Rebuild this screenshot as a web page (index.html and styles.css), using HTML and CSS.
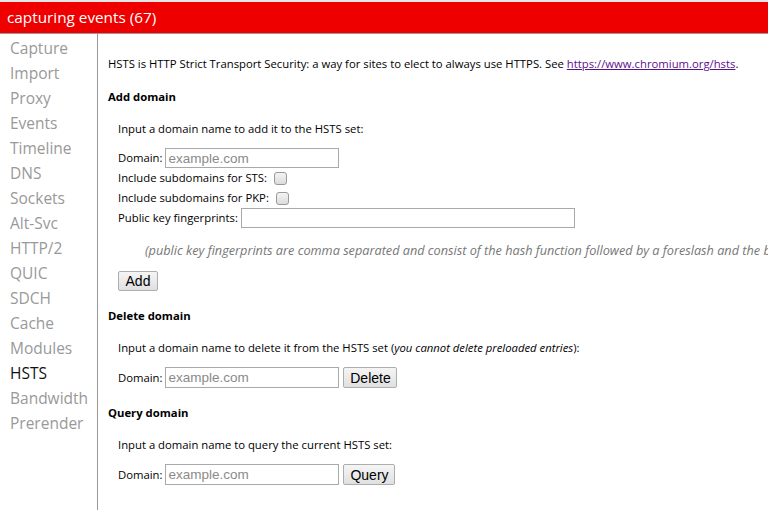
FILE: index.html
```html
<!DOCTYPE html>
<html>
<head>
<meta charset="utf-8">
<link rel="stylesheet" href="styles.css">
</head>
<body>
<div class="status-bar">capturing events (67)</div>
<div class="main">
  <nav class="tabs">
    <div class="tab">Capture</div>
    <div class="tab">Import</div>
    <div class="tab">Proxy</div>
    <div class="tab">Events</div>
    <div class="tab">Timeline</div>
    <div class="tab">DNS</div>
    <div class="tab">Sockets</div>
    <div class="tab">Alt-Svc</div>
    <div class="tab">HTTP/2</div>
    <div class="tab">QUIC</div>
    <div class="tab">SDCH</div>
    <div class="tab">Cache</div>
    <div class="tab">Modules</div>
    <div class="tab selected">HSTS</div>
    <div class="tab">Bandwidth</div>
    <div class="tab">Prerender</div>
  </nav>
  <div class="content">
    <p class="intro">HSTS is HTTP Strict Transport Security: a way for sites to elect to always use HTTPS. See <a href="#">https://www.chromium.org/hsts</a>.</p>

    <h4 class="heading h-add">Add domain</h4>
    <p class="desc">Input a domain name to add it to the HSTS set:</p>
    <div class="form">
      <div class="row"><span>Domain:</span><input class="domain" type="text" placeholder="example.com"></div>
      <div class="row"><span>Include subdomains for STS:</span><input class="check" type="checkbox"></div>
      <div class="row"><span>Include subdomains for PKP:</span><input class="check" type="checkbox"></div>
      <div class="row"><span>Public key fingerprints:</span><input class="pins" type="text"></div>
    </div>
    <p class="note">(public key fingerprints are comma separated and consist of the hash function followed by a foreslash and the base64 encoded fingerprint)</p>
    <div class="form"><button class="btn btn-add">Add</button></div>

    <h4 class="heading h-del">Delete domain</h4>
    <p class="desc">Input a domain name to delete it from the HSTS set (<i>you cannot delete preloaded entries</i>):</p>
    <div class="form">
      <div class="row row-btn"><span>Domain:</span><input class="domain" type="text" placeholder="example.com"><button class="btn btn-del">Delete</button></div>
    </div>

    <h4 class="heading h-del">Query domain</h4>
    <p class="desc">Input a domain name to query the current HSTS set:</p>
    <div class="form">
      <div class="row row-btn"><span>Domain:</span><input class="domain" type="text" placeholder="example.com"><button class="btn btn-query">Query</button></div>
    </div>
  </div>
</div>
</body>
</html>
```
FILE: styles.css
```css
html, body {
  margin: 0;
  padding: 0;
  background: #fff;
  height: 100%;
  overflow: hidden;
}
body {
  font-family: "Open Sans", "Noto Sans", sans-serif;
  color: #000;
}
.status-bar {
  border-top: 2px solid #e6e6e6;
  border-bottom: 1px solid #999;
  background: #ee0000;
  color: #fff;
  line-height: 31px;
  font-size: 15.3px;
  padding-left: 7px;
  box-sizing: border-box;
  height: 34px;
}
.main {
  display: flex;
  height: calc(100% - 34px);
}
.tabs {
  width: 97px;
  border-right: 1px solid #999;
  padding-top: 2px;
  flex: none;
}
.tab {
  font-size: 15.5px;
  line-height: 25px;
  color: #999;
  padding-left: 10px;
  white-space: nowrap;
}
.tab.selected {
  color: #111;
}
.content {
  flex: 1;
  min-width: 0;
  overflow: hidden;
  white-space: nowrap;
  padding-left: 10px;
  font-size: 11.3px;
  line-height: 16px;
}
p, h4 {
  margin: 0;
}
.intro {
  margin-top: 22px;
}
.intro a {
  color: #5b0f8f;
}
.heading {
  font-weight: bold;
}
.h-add { margin-top: 17px; }
.h-del { margin-top: 17px; }
.desc {
  margin-top: 16px;
  padding-left: 10px;
}
.form {
  padding-left: 10px;
}
.desc + .form {
  margin-top: 11px;
}
.row {
  display: flex;
  align-items: center;
  height: 20px;
}
.row span {
  margin-right: 3px;
}
.row-btn {
  height: 21px;
}
input.domain, input.pins {
  box-sizing: border-box;
  height: 20px;
  border: 1px solid #a9a9a9;
  font-family: "Liberation Sans", Arial, sans-serif;
  font-size: 13.5px;
  padding: 0 2px;
  margin: 0;
  outline: none;
}
.row-btn input.domain { height: 21px; }
input.domain { width: 174px; }
input.pins { width: 334px; }
input::placeholder { color: #8a8a8a; }
input.check {
  width: 13px;
  height: 13px;
  margin: 0 0 0 4px;
  appearance: none;
  border: 1px solid #9a9a9a;
  border-radius: 3px;
  background: linear-gradient(#f4f4f4, #dcdcdc);
}
.note {
  margin-top: 14px;
  padding-left: 37px;
  font-style: italic;
  font-size: 12.7px;
  color: #777;
}
.note + .form {
  margin-top: 13px;
}
.btn {
  box-sizing: border-box;
  height: 21px;
  border: 1px solid #adadad;
  border-radius: 2px;
  background: linear-gradient(#f5f5f5, #e0e0e0);
  font-family: "Liberation Sans", Arial, sans-serif;
  font-size: 14px;
  color: #000;
  padding: 0;
  margin: 0;
}
.btn-add { width: 40px; height: 20px; }
.btn-del { width: 54px; margin-left: 4px; }
.btn-query { width: 52px; margin-left: 4px; }
```
